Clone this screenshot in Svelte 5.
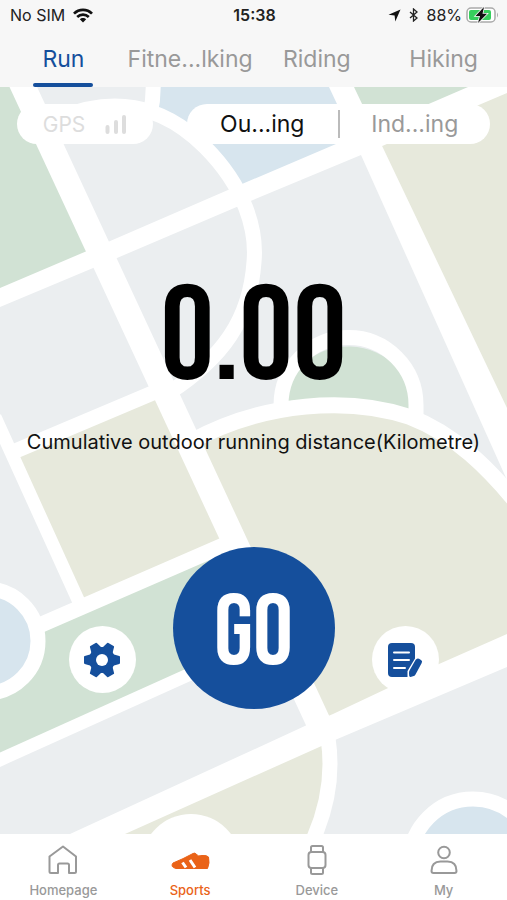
<script>
  const tabs = ["Run", "Fitne...lking", "Riding", "Hiking"]
  const modes = ["Ou...ing", "Ind...ing"]
  const navItems = [
    { id: "home", label: "Homepage" },
    { id: "sports", label: "Sports" },
    { id: "device", label: "Device" },
    { id: "my", label: "My" },
  ]

  let activeTab = $state("Run")
  let activeMode = $state("Ou...ing")
  let activeNav = $state("sports")
  let distance = $state(0)
</script>

<div class="app">
  <header class="top">
    <div class="status">
      <div class="status-side">
        <span>No SIM</span>
        <svg width="20" height="15" viewBox="0 0 20 15" aria-hidden="true">
          <g fill="none" stroke="#111" stroke-width="2.7">
            <path d="M1 5.6C6 .6 14 .6 19 5.6" />
            <path d="M4.2 8.9C7.5 5.8 12.5 5.8 15.8 8.9" />
          </g>
          <path d="M10 14.5 6.8 11.3C8.5 9.6 11.5 9.6 13.2 11.3Z" fill="#111" />
        </svg>
      </div>
      <span class="time">15:38</span>
      <div class="status-side right">
        <svg width="13" height="13" viewBox="0 0 13 13" aria-hidden="true">
          <path d="M12.5.5 7.3 12.5 6.6 6.6.5 5.8Z" fill="#111" />
        </svg>
        <svg class="bluetooth" width="9" height="14" viewBox="0 0 9 14" aria-hidden="true">
          <path d="M1 4 8 10 4.5 13V1L8 4 1 10" fill="none" stroke="#222" stroke-width="1.3" />
        </svg>
        <span>88%</span>
        <svg width="33" height="18" viewBox="0 0 33 18" aria-hidden="true">
          <rect x="1" y="2" width="28" height="14" rx="4" fill="#fff" stroke="#aaa" stroke-width="1.5" />
          <rect x="3" y="4" width="22" height="10" rx="2" fill="#36cf5d" />
          <path d="M31 6.5q2 2.5 0 5Z" fill="#aaa" />
          <path d="M18 1 9.5 10H14L12 17 21 7.7H16.5Z" fill="#111" stroke="#f7f7f7" stroke-width="1.6" paint-order="stroke" />
        </svg>
      </div>
    </div>
    <nav class="tabs" aria-label="Activity">
      {#each tabs as tab}
        <button type="button" class:active={activeTab === tab} onclick={() => (activeTab = tab)}>{tab}</button>
      {/each}
    </nav>
  </header>

  <main class="stage">
    <svg class="map" viewBox="0 87 507 747" preserveAspectRatio="xMidYMid slice" aria-hidden="true">
      <!-- blocks -->
      <rect y="87" width="507" height="747" fill="#ebeef0" />
      <path d="M0 87H23L100 258 0 298Z" fill="#d1e2d4" />
      <path d="M153 87H341L365 140 245 195 205 147 153 112Z" fill="#d7e5ee" />
      <path d="M341 87H487L372 137Z" fill="#d1e2d4" />
      <path d="M365 140 507 80V445Z" fill="#e7e9dc" />
      <path d="M14 452 165 392 235 545 78 606Z" fill="#e7e9dc" />
      <path d="M190 440C270 398 350 393 410 417 462 441 490 475 507 495V650L322 732Z" fill="#e7e9dc" />
      <path d="M30 629 240 538 280 640 0 759V640Z" fill="#d1e2d4" />
      <path d="M90 840 328 736Q334 790 312 840Z" fill="#e7e9dc" />
      <path d="M281 412A67 67 0 0 1 416 416Q345 390 281 412Z" fill="#d1e2d4" />
      <!-- roads -->
      <g fill="none" stroke="#fff">
        <path d="M14 67 322 730" stroke-width="25" />
        <path d="M60 118C110 97 160 102 205 147 245 187 257 230 254 262 250 320 222 358 170 392" stroke-width="15" />
        <path d="M153 80Q154 98 150 115" stroke-width="15" />
        <path d="M13 452 155 392" stroke-width="15" />
        <path d="M-5 417 79 602" stroke-width="13" />
        <path d="M190 442C265 401 350 397 410 417 455 434 490 470 517 503" stroke-width="16" />
        <path d="M281 414V405A67 67 0 0 1 416 405V418" stroke-width="15" />
        <path d="M38 626 245 536" stroke-width="16" />
        <path d="M-5 762 290 629" stroke-width="13" />
        <path d="M328 738Q336 790 312 842" stroke-width="15" />
      </g>
      <g fill="#fff">
        <path d="M329 87H354L384 150 507 408V480L361 155Z" />
        <path d="M0 288 94 248 228 190 336 144 468 87H507V93L361 155 253 200 117 258 0 307Z" />
        <path d="M70 834 307 725 333 714 439 664 507 634V667L335 740 125 834Z" />
        <circle cx="191" cy="864" r="50" />
      </g>
      <!-- lakes -->
      <g fill="#d7e5ee" stroke="#fff" stroke-width="15">
        <circle cx="-14" cy="641" r="52" />
        <circle cx="473" cy="862" r="63" />
      </g>
    </svg>

    <div class="content">
      <div class="pills">
        <div class="gps">
          <span>GPS</span>
          <svg width="22" height="20" viewBox="0 0 22 20" aria-hidden="true">
            <path d="M2.5 13V18M11 8V18M19 3V18" fill="none" stroke="#ddd" stroke-width="4" stroke-linecap="round" />
          </svg>
        </div>
        <div class="modes">
          {#each modes as mode}
            <button type="button" class:active={activeMode === mode} onclick={() => (activeMode = mode)}>{mode}</button>
          {/each}
        </div>
      </div>

      <div class="summary">
        <strong class="distance">{distance.toFixed(2)}</strong>
        <p class="caption">Cumulative outdoor running distance(Kilometre)</p>
      </div>

      <div class="actions">
        <button class="round" type="button" aria-label="Settings">
          <svg width="36" height="36" viewBox="0 0 36 36" aria-hidden="true">
            <g fill="#154f9c" stroke="#154f9c" stroke-width="2" stroke-linejoin="round">
              <circle cx="18" cy="18" r="12" />
              {#each [0, 60, 120] as angle}
                <path d="M1 15 8 13H28L35 15V21L28 23H8L1 21Z" transform="rotate({angle} 18 18)" />
              {/each}
            </g>
            <circle cx="18" cy="18" r="6" fill="#fff" />
          </svg>
        </button>
        <button class="go" type="button">GO</button>
        <button class="round" type="button" aria-label="Records">
          <svg width="36" height="36" viewBox="0 0 36 36" aria-hidden="true">
            <rect x="1" y="1" width="27" height="34" rx="4" fill="#154f9c" />
            <path d="M7 10.5H22M7 18H22M7 26H18" stroke="#fff" stroke-width="2" stroke-linecap="round" />
            <path d="M20.5 36V29L28 16.5Q30 14 33 15H36V36Z" fill="#fff" />
            <path d="M28.5 18Q30 15.8 32 16.8L34 18Q35.8 19.2 34.7 21L28.5 32.5Q27.8 34 26 34.3L23.5 34.9Q22.3 35 22.2 33.8L22 31Q21.9 29.5 22.8 28Z" fill="#154f9c" />
          </svg>
        </button>
      </div>
    </div>
  </main>

  <nav class="bottom" aria-label="Main">
    {#each navItems as item}
      <button type="button" class:active={activeNav === item.id} onclick={() => (activeNav = item.id)}>
        <svg width="40" height="32" viewBox="0 0 40 32" fill="none" stroke="currentColor" stroke-width="2" stroke-linejoin="round" aria-hidden="true">
          {#if item.id === "home"}
            <path d="M20 2.5 33 12.5V27.5Q33 29 31.5 29H26V21Q26 19.5 24.5 19.5H16.5Q15 19.5 15 21V29H8Q6.5 29 6.5 27.5V12.5Z" />
          {:else if item.id === "sports"}
            <path d="M3 19Q13 15 23 9.5 25 8.5 26 10 28 13 32 11.5 37 11 38.5 13 40 19 37.5 24.5H6Q0 23 3 19Z" fill="currentColor" stroke-width="1" />
            <path d="M12.5 18.5 16 23.5M20 16 25 23.5" stroke="#fff" stroke-width="3" />
          {:else if item.id === "device"}
            <rect x="11.5" y="8" width="17" height="16" rx="3" />
            <path d="M14 8V3.5Q14 2 15.5 2H24.5Q26 2 26 3.5V8M14 24V28.5Q14 30 15.5 30H24.5Q26 30 26 28.5V24" />
          {:else}
            <circle cx="20" cy="8.5" r="5.8" />
            <path d="M7.5 27Q7.5 17.5 16.5 17.5H23.5Q32.5 17.5 32.5 27 32.5 29 30.5 29H9.5Q7.5 29 7.5 27Z" />
          {/if}
        </svg>
        <span>{item.label}</span>
      </button>
    {/each}
  </nav>
</div>

<style>
  :global(body) {
    margin: 0;
  }
  .app {
    min-height: 100vh;
    display: flex;
    flex-direction: column;
    background: #fff;
    color: #111;
    font-family: Inter, "Liberation Sans", sans-serif;
  }
  button {
    border: none;
    background: none;
    padding: 0;
    color: inherit;
    font-family: inherit;
    cursor: pointer;
  }
  svg {
    display: block;
    flex: none;
  }
  .top {
    background: #f7f7f7;
  }
  .status {
    display: grid;
    grid-template-columns: 1fr auto 1fr;
    align-items: center;
    height: 30px;
    padding: 0 8px 0 10px;
    font-size: 16px;
    color: #222;
  }
  .status-side {
    display: flex;
    align-items: center;
    gap: 8px;
  }
  .status-side.right {
    justify-content: flex-end;
    gap: 4px;
  }
  .bluetooth {
    margin: 0 4px;
  }
  .time {
    font-weight: 600;
  }
  .tabs {
    display: grid;
    grid-template-columns: repeat(4, 1fr);
    justify-items: center;
  }
  .tabs button {
    position: relative;
    height: 57px;
    color: #999;
    font-size: 23px;
    white-space: nowrap;
  }
  .tabs button.active {
    color: #154f9c;
  }
  .tabs button.active::after {
    content: "";
    position: absolute;
    left: 50%;
    bottom: 0;
    width: 60px;
    height: 4px;
    margin-left: -30px;
    border-radius: 2px;
    background: #154f9c;
  }
  .stage {
    position: relative;
    flex: 1;
    display: flex;
    overflow: hidden;
  }
  .map {
    position: absolute;
    inset: 0;
    width: 100%;
    height: 100%;
  }
  .content {
    position: relative;
    flex: 1;
    display: flex;
    flex-direction: column;
    justify-content: space-between;
    padding: 17px 17px 125px;
  }
  .pills {
    display: flex;
    gap: 34px;
  }
  .gps,
  .modes {
    display: flex;
    align-items: center;
    height: 40px;
    border-radius: 20px;
    background: #fff;
  }
  .gps {
    justify-content: center;
    gap: 20px;
    width: 136px;
    color: #ddd;
    font-size: 21px;
  }
  .modes {
    flex: 1;
  }
  .modes button {
    flex: 1;
    color: #999;
    font-size: 23px;
  }
  .modes button + button {
    border-left: 2px solid #bbb;
  }
  .modes button.active {
    color: #111;
  }
  .summary {
    display: flex;
    flex-direction: column;
    align-items: center;
    gap: 31px;
    padding-top: 41px;
  }
  .distance,
  .go {
    font-family: "Bebas Neue", "Oswald", "Noto Sans ExtraCondensed", "Roboto Condensed", "Liberation Sans Narrow", sans-serif;
    font-weight: 400;
  }
  .distance {
    color: #000;
    font-size: 134px;
    line-height: 120px;
  }
  .caption {
    margin: 0;
    font-size: 20px;
    line-height: 24px;
    text-align: center;
  }
  .actions {
    display: flex;
    align-items: flex-end;
    justify-content: center;
    gap: 37px;
  }
  .round {
    display: flex;
    align-items: center;
    justify-content: center;
    width: 67px;
    height: 67px;
    margin-bottom: 16px;
    border-radius: 50%;
    background: #fff;
  }
  .go {
    width: 162px;
    height: 162px;
    padding-top: 12px;
    border-radius: 50%;
    background: #154f9c;
    color: #fff;
    font-size: 100px;
    line-height: 100px;
  }
  .bottom {
    display: grid;
    grid-template-columns: repeat(4, 1fr);
    height: 66px;
    background: #fff;
  }
  .bottom button {
    display: flex;
    flex-direction: column;
    align-items: center;
    justify-content: center;
    gap: 6px;
    padding-top: 7px;
    color: #999;
    font-size: 13px;
    line-height: 16px;
    font-weight: 500;
  }
  .bottom button.active {
    color: #ea6318;
  }
</style>
